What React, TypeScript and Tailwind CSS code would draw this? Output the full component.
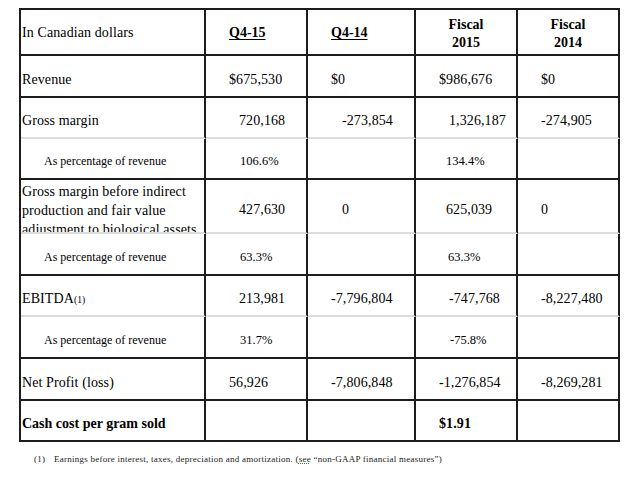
import React from "react";

const serif = { fontFamily: '"Liberation Serif", "Times New Roman", serif' };

type Cell = { text?: React.ReactNode; pl?: string; center?: boolean; small?: boolean; bold?: boolean };

const widths = ["w-[185px]", "w-[102px]", "w-[108px]", "w-[102px]", "w-[102px]"];

function Row({
  h,
  light,
  label,
  labelClass,
  cells,
}: {
  h: string;
  light?: boolean;
  label: React.ReactNode;
  labelClass?: string;
  cells: Cell[];
}) {
  const bb = light ? "border-b-[#dcdcdc]" : "border-b-[#1c1c1c]";
  return (
    <div className={`flex ${h}`}>
      <div
        className={`${widths[0]} shrink-0 border-r-2 border-r-[#1c1c1c] border-b-2 ${bb} overflow-hidden flex ${labelClass ?? "items-center pl-[1px] pt-[6px] text-[14px] tracking-[0.1px]"}`}
      >
        {label}
      </div>
      {cells.map((c, i) => (
        <div
          key={i}
          className={`${widths[i + 1]} shrink-0 border-r-2 border-r-[#1c1c1c] border-b-2 ${bb} flex items-center pt-[6px] ${c.center ? "justify-center" : ""} ${c.pl ?? ""} ${c.small ? "text-[12.5px]" : "text-[14px] tracking-[0.1px]"} ${c.bold ? "font-bold" : ""}`}
        >
          {c.text}
        </div>
      ))}
    </div>
  );
}

const pctLabel = "items-center pl-[23px] pt-[5px] text-[12px]";

export default function App() {
  return (
    <div className="w-[634px] h-[484px] bg-white text-black relative" style={serif}>
      <div className="pt-[8px] pl-[19px]">
        <div className="w-[601px] border-t-2 border-l-2 border-[#1c1c1c]">
          {/* Header */}
          <div className="flex h-[46px]">
            <div className="w-[185px] shrink-0 border-r-2 border-b-2 border-[#1c1c1c] flex items-center pl-[1px] pt-[1px] text-[14px] tracking-[0.1px]">
              In Canadian dollars
            </div>
            <div className="w-[102px] shrink-0 border-r-2 border-b-2 border-[#1c1c1c] flex items-center pl-[23px] pt-[1px] text-[14px] font-bold">
              <span className="underline underline-offset-2">Q4-15</span>
            </div>
            <div className="w-[108px] shrink-0 border-r-2 border-b-2 border-[#1c1c1c] flex items-center pl-[23px] pt-[1px] text-[14px] font-bold">
              <span className="underline underline-offset-2">Q4-14</span>
            </div>
            <div className="w-[102px] shrink-0 border-r-2 border-b-2 border-[#1c1c1c] flex items-center justify-center pt-[4px] text-[14px] font-bold leading-[18px] text-center">
              Fiscal
              <br />
              2015
            </div>
            <div className="w-[102px] shrink-0 border-r-2 border-b-2 border-[#1c1c1c] flex items-center justify-center pt-[4px] text-[14px] font-bold leading-[18px] text-center">
              Fiscal
              <br />
              2014
            </div>
          </div>

          <Row
            h="h-[42px]"
            label="Revenue"
            cells={[
              { text: "$675,530", pl: "pl-[23px]" },
              { text: "$0", pl: "pl-[23px]" },
              { text: "$986,676", pl: "pl-[23px]" },
              { text: "$0", pl: "pl-[23px]" },
            ]}
          />
          <Row
            h="h-[41px]"
            light
            label="Gross margin"
            cells={[
              { text: "720,168", pl: "pl-[33px]" },
              { text: "-273,854", pl: "pl-[34px]" },
              { text: "1,326,187", pl: "pl-[33px]" },
              { text: "-274,905", pl: "pl-[23px]" },
            ]}
          />
          <Row
            h="h-[41px]"
            label="As percentage of revenue"
            labelClass={pctLabel}
            cells={[
              { text: "106.6%", pl: "pl-[34px]", small: true },
              { text: "" },
              { text: "134.4%", pl: "pl-[30px]", small: true },
              { text: "" },
            ]}
          />
          <Row
            h="h-[54px]"
            light
            label={
              <div className="leading-[19px]">
                Gross margin before indirect
                <br />
                production and fair value
                <br />
                adjustment to biological assets
              </div>
            }
            labelClass="items-start pl-[1px] pt-[2px] text-[14px] tracking-[0.1px]"
            cells={[
              { text: "427,630", pl: "pl-[33px]" },
              { text: "0", pl: "pl-[34px]" },
              { text: "625,039", pl: "pl-[30px]" },
              { text: "0", pl: "pl-[23px]" },
            ]}
          />
          <Row
            h="h-[42px]"
            label="As percentage of revenue"
            labelClass={pctLabel}
            cells={[
              { text: "63.3%", pl: "pl-[34px]", small: true },
              { text: "" },
              { text: "63.3%", pl: "pl-[32px]", small: true },
              { text: "" },
            ]}
          />
          <Row
            h="h-[41px]"
            light
            label={
              <span>
                EBITDA<span className="text-[9.5px]">(1)</span>
              </span>
            }
            cells={[
              { text: "213,981", pl: "pl-[33px]" },
              { text: "-7,796,804", pl: "pl-[23px]" },
              { text: "-747,768", pl: "pl-[33px]" },
              { text: "-8,227,480", pl: "pl-[23px]" },
            ]}
          />
          <Row
            h="h-[42px]"
            label="As percentage of revenue"
            labelClass={pctLabel}
            cells={[
              { text: "31.7%", pl: "pl-[34px]", small: true },
              { text: "" },
              { text: "-75.8%", pl: "pl-[34px]", small: true },
              { text: "" },
            ]}
          />
          <Row
            h="h-[42px]"
            label="Net Profit (loss)"
            cells={[
              { text: "56,926", pl: "pl-[23px]" },
              { text: "-7,806,848", pl: "pl-[23px]" },
              { text: "-1,276,854", pl: "pl-[23px]" },
              { text: "-8,269,281", pl: "pl-[23px]" },
            ]}
          />
          <Row
            h="h-[41px]"
            label="Cash cost per gram sold"
            labelClass="items-center pl-[1px] pt-[6px] text-[14px] font-bold"
            cells={[
              { text: "" },
              { text: "" },
              { text: "$1.91", pl: "pl-[23px]", bold: true },
              { text: "" },
            ]}
          />
        </div>
        <div className="flex items-center pt-[11px] text-[9px] tracking-[0.25px] text-[#222]">
          <span className="pl-[15px] w-[35px]">(1)</span>
          <span>
            Earnings before interest, taxes, depreciation and amortization. (
            <span className="underline decoration-dotted decoration-[#2a8a2a]">see</span>
            {" \u201cnon-GAAP financial measures\u201d)"}
          </span>
        </div>
      </div>
    </div>
  );
}
